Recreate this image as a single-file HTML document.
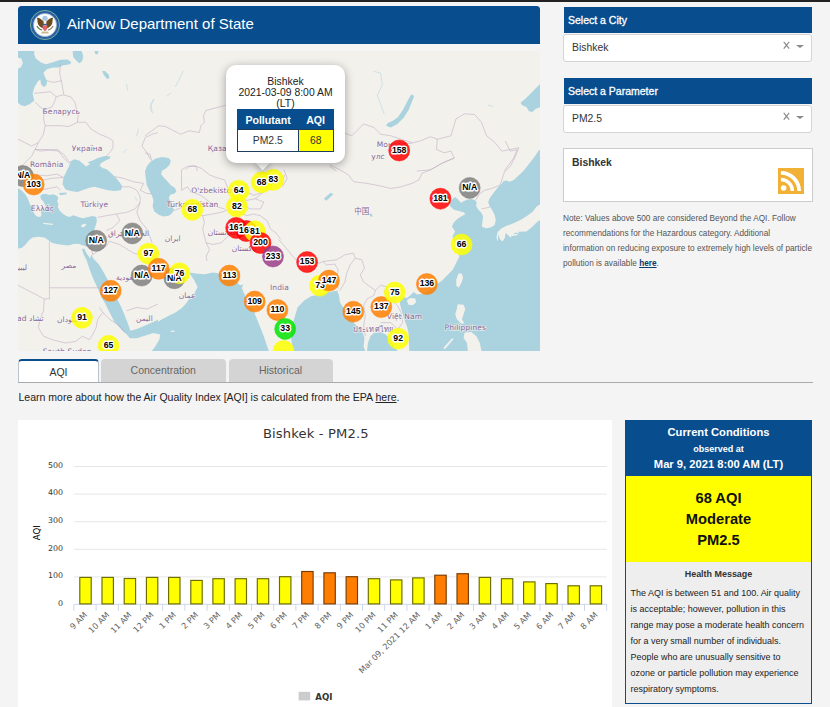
<!DOCTYPE html>
<html lang="en">
<head>
<meta charset="utf-8">
<title>AirNow Department of State</title>
<style>
*{box-sizing:border-box;margin:0;padding:0}
html,body{width:830px;height:707px;overflow:hidden;background:#f4f4f4;font-family:"Liberation Sans",sans-serif;color:#333}
body{position:relative}
.abs{position:absolute}
#topbar{left:0;top:0;width:830px;height:2px;background:#222}
#hdr{left:18px;top:6.2px;width:522px;height:37.5px;background:#084e8f;border-radius:3.5px 3.5px 0 0;color:#fff}
#hdr .t{position:absolute;left:49px;top:9px;font-size:15px;line-height:18px;white-space:nowrap}
#map{left:18px;top:51px;width:522px;height:300px;overflow:hidden;background:#f2efe9}
.ml{font:bold 9.9px "Liberation Sans",sans-serif;text-anchor:middle;fill:#000;stroke:#fff;stroke-width:3px;stroke-linejoin:round;paint-order:stroke fill}
.cl{font:7.5px "DejaVu Sans","Noto Sans CJK SC",sans-serif;fill:#85689a;stroke:#f8f6f2;stroke-width:1.3px;stroke-opacity:.75;paint-order:stroke fill;letter-spacing:.1px}
#pop{left:226px;top:64.5px;width:119px;height:98.5px;background:#fff;border-radius:10px;box-shadow:0 2px 10px rgba(0,0,0,.35);font-size:10.4px;line-height:11.2px;color:#222;text-align:center}
#pop .tx{position:absolute;left:0;top:11.5px;width:100%}
#pop table{position:absolute;left:11px;top:44.3px;width:97px;border-collapse:collapse;border:1px solid #084e8f}
#pop th{background:#084e8f;color:#fff;font-size:10.6px;font-weight:bold;height:20.5px;line-height:12px;padding:0}
#pop td{height:22px;font-size:10.4px;color:#333;border:1px solid #1c3d5e;padding:0;line-height:12px}
#tip{left:256.7px;top:157.3px;width:11.4px;height:11.4px;background:#fff;transform:rotate(45deg);box-shadow:2px 2px 6px rgba(0,0,0,.25)}
.ph{background:#084e8f;color:#fff;font-size:10.5px;line-height:26px;padding-left:4px;height:26.5px;left:564px;width:248px;white-space:nowrap;-webkit-text-stroke:0.3px #fff}
.sel{left:563px;width:248.8px;height:28.2px;background:#fff;border:1px solid #d4d4d4;border-radius:3px;font-size:10.4px;line-height:26.4px;padding-left:8px;color:#333}
.sel .x{position:absolute;right:18.4px;top:-1.4px;font-size:11.5px;color:#888;transform:scale(.92,1.12)}
.sel .c{position:absolute;right:7.3px;top:10.2px;width:0;height:0;border-left:4px solid transparent;border-right:4px solid transparent;border-top:3.3px solid #888}
#city{left:563px;top:148px;width:250px;height:54px;background:#fff;border:1px solid #ccc}
#city b{position:absolute;left:8px;top:6.5px;font-size:10.4px;line-height:14px;color:#333}
#rss{left:778px;top:168px;width:26px;height:26px}
#note{left:563px;top:212.3px;font-size:8.25px;line-height:14.95px;color:#555;white-space:nowrap}
#note a{color:#0a3a6a;font-weight:bold;text-decoration:underline}
.tab{top:359.2px;height:23.3px;border-radius:4px 4px 0 0;font-size:10.5px;line-height:23px;text-align:center;background:#d4d4d4;color:#666}
#tabline{left:18px;top:381.5px;width:795px;height:1px;background:#aaa}
#learn{left:18.5px;top:390.2px;font-size:10.52px;line-height:14px;color:#222;white-space:nowrap}
#learn a{color:#222;text-decoration:underline}
#chart{left:18px;top:420px;width:594px;height:287px;background:#fff}
#cc{left:625px;top:420px;width:187px;height:283.5px;border:1px solid #084e8f;background:#eee}
#cc .h{position:absolute;left:0;top:0;width:100%;height:54.6px;background:#084e8f;color:#fff;text-align:center;font-weight:bold;font-size:11.2px;line-height:16px}
#cc .h div{position:absolute;left:0;width:100%;white-space:nowrap}
#cc .y{position:absolute;left:0;top:54.6px;width:100%;height:86.3px;background:#ffff00;color:#111;text-align:center;font-weight:bold;font-size:14.7px;line-height:21px;padding-top:12.6px}
#cc .hm{position:absolute;left:0;top:145.8px;width:100%;text-align:center;font-weight:bold;font-size:8.95px;line-height:14px;color:#333}
#cc .m{position:absolute;left:4.5px;top:163.5px;font-size:8.97px;line-height:16.07px;color:#222;white-space:nowrap}
</style>
</head>
<body>
<div id="topbar" class="abs"></div>
<div id="hdr" class="abs"><svg class="abs" style="left:12px;top:4px" width="30" height="30" viewBox="-15 -15 30 30"><circle r="14.6" fill="#2a62a4" stroke="#86b39c" stroke-width=".9"/><circle r="11.5" fill="#fdfdfd" stroke="#9db9c9" stroke-width=".7"/><circle cx="0" cy="-6.6" r="2.7" fill="#a9c8e4"/><path d="M-1.2-3.2C-4-6.5-6.5-7.6-8-7.2c.6 1.8.3 4.2 1 6.2 1 2.4 3.2 3.6 5.2 4.2zM1.2-3.2C4-6.5 6.5-7.6 8-7.2c-.6 1.8-.3 4.2-1 6.2-1 2.4-3.2 3.6-5.2 4.2z" fill="#6b4a1c"/><path d="M-2.4-1.2h4.8v1.6h-4.8z" fill="#3a5f8a"/><path d="M-2.4.4h4.8v2.4c0 1.6-1.2 2.6-2.4 3.2-1.2-.6-2.4-1.6-2.4-3.2z" fill="#e0646a"/><path d="M-8.6 1.2c1.200 2.400 3 3.800 5.400 4.400l.4-1.200c-2.200-.4-3.800-1.600-4.800-3.600z" fill="#4f7f3a"/><path d="M8.600 1.200c-1.200 2.400-3 3.800-5.400 4.400l-.4-1.200c2.200-.4 3.800-1.600 4.800-3.600z" fill="#8a7a5a"/><path d="M-3 6.400h6l1 2.200h-8z" fill="#c9b98f"/><circle cx="0" cy="-3.300" r="1.300" fill="#f2efe6"/></svg><span class="t">AirNow Department of State</span></div>
<div id="map" class="abs">
<svg width="522" height="300" viewBox="0 0 522 300" style="position:absolute;left:0;top:0"><rect width="522" height="300" fill="#f3f1ec"/><g style="filter:blur(.3px)"><path d="M0.0 0.0L16.5 0.0L16.0 3.1L17.8 7.6L22.9 11.5L28.0 13.2L34.8 11.2L42.4 8.8L49.6 8.5L53.5 11.2L51.8 13.2L44.5 14.6L40.7 16.6L34.8 16.6L28.8 18.3L25.5 21.7L26.8 25.5L29.2 30.2L28.2 34.4L25.5 36.0L23.1 33.3L22.2 28.5L20.0 30.2L16.5 36.0L14.6 42.4L16.3 49.6L11.9 52.9L6.8 55.2L2.5 54.0L0.0 51.8L0.0 17.8L3.1 16.1L4.8 11.9L3.4 7.6L0.0 6.8Z" fill="#aad3df"/>
<path d="M54.6 0.0L63.6 0.0L65.3 5.1L64.1 10.2L61.1 12.2L58.0 9.3L55.2 5.9Z" fill="#aad3df"/>
<path d="M76.4 0.0L80.6 0.0L79.4 3.4L77.2 3.1Z" fill="#aad3df"/>
<path d="M84.3 20.0L86.9 20.0L90.8 23.8L91.3 27.2L89.1 28.0L85.7 23.8Z" fill="#aad3df"/>
<path d="M44.5 133.3L45.5 126.5L48.4 120.5L50.9 115.5L52.6 110.4L56.0 108.3L61.1 109.5L65.3 112.9L67.9 115.5L72.1 112.9L69.6 111.2L74.7 109.5L79.8 107.0L86.5 104.9L92.5 105.6L91.6 107.8L87.4 109.5L83.2 112.1L81.5 114.6L84.8 117.2L88.2 118.0L92.5 121.4L97.6 126.5L101.8 131.6L104.4 135.8L102.7 139.2L96.7 140.1L89.9 139.2L83.2 137.5L76.4 135.8L71.3 136.7L66.2 138.4L59.4 140.9L52.6 140.1L47.5 138.4Z" fill="#aad3df"/>
<path d="M127.0 120.5L128.7 115.5L132.1 111.2L137.2 107.8L144.0 106.1L150.8 107.0L152.8 109.5L151.6 113.8L148.2 117.2L144.0 119.7L143.1 123.1L145.7 126.5L149.1 129.9L152.5 134.1L156.7 136.7L158.4 140.1L156.7 142.6L152.5 143.5L150.8 146.8L152.5 151.1L155.0 155.3L155.8 159.6L154.2 162.1L150.8 164.7L145.7 165.5L140.6 163.8L136.3 160.4L134.6 155.3L135.5 149.4L133.8 144.3L131.2 139.2L128.7 134.1L127.8 127.3Z" fill="#aad3df"/>
<path d="M0.0 137.2L3.6 139.6L7.2 143.3L9.6 146.9L11.4 151.7L13.3 155.9L15.1 160.1L16.9 163.7L19.9 166.1L22.9 165.5L23.5 162.5L21.7 159.5L24.1 157.1L26.5 158.9L28.9 157.1L27.1 154.1L25.3 150.5L22.9 148.1L22.3 145.1L24.1 143.3L27.7 142.7L31.3 143.9L34.9 143.3L38.6 144.5L40.4 146.9L39.2 149.9L40.4 152.9L39.8 155.9L41.6 159.5L44.6 162.5L48.2 164.9L51.8 166.1L55.4 164.3L60.2 166.1L65.1 167.3L69.9 166.1L74.7 164.9L78.3 166.1L78.9 169.8L77.7 174.6L75.9 180.6L73.5 186.6L71.1 192.7L69.3 195.7L65.1 194.5L60.2 192.7L55.4 192.9L50.6 194.5L45.8 193.9L39.8 193.3L33.7 191.7L30.1 189.0L26.5 186.6L20.5 185.7L14.5 186.6L10.8 189.6L7.2 193.9L3.6 196.9L0.0 197.5Z" fill="#aad3df"/>
<path d="M41.0 142.0L48.2 141.4L48.8 143.3L42.2 144.2Z" fill="#aad3df"/>
<path d="M63.8 197.8L65.8 203.8L68.6 209.2L72.0 219.4L76.0 229.6L80.1 238.0L83.5 246.5L86.9 252.0L91.1 260.4L96.2 270.6L103.9 279.1L107.9 282.5L112.0 287.2L118.8 287.2L129.0 283.9L140.0 280.5L140.0 268.8L129.0 273.7L118.8 277.9L112.3 279.8L110.3 273.7L106.9 264.8L103.5 256.4L98.9 247.5L96.0 240.8L93.0 235.3L89.6 228.5L85.9 221.7L80.8 213.3L75.3 207.5L73.3 203.4L72.1 207.5L68.7 202.6L66.2 197.8Z" fill="#aad3df"/>
<path d="M127.0 276.7L130.4 275.0L137.2 272.5L144.0 268.2L150.8 264.8L157.5 261.5L163.5 257.2L167.7 253.0L171.1 247.9L176.2 242.8L179.6 236.0L176.2 229.2L171.1 221.6L177.9 222.4L186.4 223.3L194.9 221.6L201.7 222.4L218.6 230.9L222.0 234.3L225.4 233.5L223.7 236.8L226.3 242.8L228.8 247.9L235.6 259.8L239.0 268.2L242.4 276.7L245.8 285.2L249.2 295.4L250.9 300.0L133.8 300.0L137.2 295.4L141.4 288.6L142.3 283.5L133.8 281.8L127.0 281.8Z" fill="#aad3df"/>
<path d="M368.0 74.7L372.8 76.4L379.2 73.0L385.5 67.0L390.8 58.5L394.2 50.1L396.2 45.0L393.5 43.3L389.2 50.4L385.0 58.7L379.9 66.2L374.1 70.3L369.7 72.1Z" fill="#aad3df"/>
<path d="M382.0 69.2L385.9 65.5L390.5 58.5L393.0 51.4L394.7 45.5L392.5 44.6L390.0 50.6L387.4 57.0L383.4 62.8L382.0 64.5Z" fill="#aad3df"/>
<path d="M305.8 147.7L312.5 141.8L315.4 142.9L311.7 146.8L308.3 149.7Z" fill="#aad3df"/>
<path d="M350.7 163.0L353.3 162.6L355.0 165.5L352.4 165.5Z" fill="#aad3df"/>
<path d="M275.2 300.0L273.5 290.3L272.7 281.8L274.4 275.0L276.1 268.2L279.5 256.4L286.2 249.6L293.0 245.3L301.5 243.6L311.7 241.1L319.3 239.4L321.0 244.5L321.9 251.3L325.3 256.4L333.8 269.9L338.8 275.0L343.9 280.1L346.5 286.9L345.6 295.4L347.3 300.0Z" fill="#aad3df"/>
<path d="M349.0 300.0L349.9 292.0L352.4 285.2L355.8 281.8L362.6 281.0L367.7 283.5L372.8 288.6L376.2 295.4L379.6 300.0Z" fill="#aad3df"/>
<path d="M522.8 32.2L517.8 37.3L512.7 42.4L507.6 47.5L502.5 51.8L504.2 54.3L508.4 56.0L511.0 60.2L514.4 61.1L517.8 57.7L522.8 56.0Z" fill="#aad3df"/>
<path d="M522.8 99.3L521.1 99.0L516.0 106.6L510.9 113.0L505.8 119.4L500.7 124.5L495.6 128.9L491.8 130.8L488.0 129.5L485.5 130.2L482.9 133.4L479.1 137.2L475.3 142.3L471.5 147.4L470.2 151.2L471.5 155.0L474.0 158.8L476.6 163.9L477.8 169.0L476.6 174.1L472.7 176.6L467.6 177.3L463.8 175.4L464.5 170.3L465.1 165.2L463.2 161.4L460.0 158.2L458.1 155.0L458.7 151.2L456.8 149.3L453.6 148.0L449.8 148.6L446.0 149.9L442.8 151.8L439.6 148.0L437.1 146.1L433.3 149.3L432.0 152.5L432.0 155.0L435.8 158.8L440.9 160.1L446.0 161.4L447.3 163.3L443.5 165.2L439.6 167.7L435.8 171.6L433.9 175.4L437.1 180.5L434.5 185.6L435.8 189.0L441.4 205.5L438.0 212.2L434.6 219.0L429.5 224.1L424.4 229.2L417.6 234.3L410.8 239.4L404.1 242.8L399.0 243.6L395.6 241.1L392.2 244.5L388.8 247.0L385.4 246.2L382.0 247.9L382.0 253.0L383.7 259.8L386.2 268.2L388.8 275.0L390.5 281.8L391.3 300.5L523.0 301.0L523.0 99.0Z" fill="#aad3df"/>
<path d="M522.6 153.1L518.6 155.6L514.7 160.7L509.6 164.6L503.3 168.4L495.6 172.2L488.0 175.1L482.9 177.7L479.4 181.5L478.5 186.8L479.7 190.6L480.4 183.4L482.1 188.5L484.7 190.5L486.9 186.8L487.6 181.7L492.8 186.8L493.7 183.6L498.2 181.5L501.4 183.0L491.5 183.1L494.0 185.1L499.1 184.2L500.8 180.8L508.4 180.5L513.5 176.6L518.6 171.6L522.6 168.4Z" fill="#f3f1ec"/>
<path d="M388.8 249.6L392.2 247.0L397.3 247.5L398.1 251.3L394.7 254.3L390.5 253.8Z" fill="#f3f1ec"/>
<path d="M440.5 222.4L443.9 222.4L445.1 226.7L443.1 232.6L440.5 236.8L438.3 234.3L438.3 228.4Z" fill="#f3f1ec"/>
<path d="M439.7 253.3L445.6 253.8L447.3 258.1L445.6 263.2L443.9 268.2L446.5 272.5L443.1 272.5L438.8 268.2L437.2 263.2L438.8 258.1Z" fill="#f3f1ec"/>
<path d="M446.5 281.8L453.3 281.0L458.4 285.2L461.8 292.0L463.5 300.0L449.9 300.0L449.0 292.0L445.6 286.9Z" fill="#f3f1ec"/>
<path d="M425.3 297.1L432.9 288.6L434.9 286.9L435.6 287.9L432.9 291.2L427.0 297.9Z" fill="#f3f1ec"/>
<path d="M152.6 279.7L156.2 279.5L156.8 280.7L153.2 280.9Z" fill="#f3f1ec"/>
<path d="M63.3 174.0L65.7 173.1L68.4 172.8L67.5 174.8L65.1 176.4L63.3 175.8Z" fill="#f3f1ec"/>
<path d="M25.3 171.8L30.1 172.2L34.9 172.8L34.9 173.9L30.1 173.6L25.5 172.9Z" fill="#f3f1ec"/>
<path d="M42.4 13.6L41.6 22.1L43.3 29.7L45.0 39.0L45.8 43.3M28.8 29.7L35.6 31.4L43.3 29.7M16.1 42.4L23.8 41.6L32.2 40.7L38.2 45.8L45.0 43.8M38.2 45.8L36.5 50.9L33.9 56.0L26.3 58.5L22.1 56.0L17.0 50.9M45.0 43.8L52.6 45.8L56.8 50.9L58.5 57.7L60.2 64.5L59.4 71.3L56.0 73.0L50.9 75.5L42.4 74.7L33.9 74.7L27.2 74.7L25.5 67.9L26.3 58.5M59.4 71.3L67.9 71.3L73.0 78.1L81.5 83.2L89.9 86.5L95.0 89.9L95.0 96.7L91.6 101.8L88.2 105.2M27.2 74.7L25.5 83.2L20.4 91.6L17.0 98.4L22.1 100.1L30.5 99.3L39.0 98.4L45.8 103.5L50.9 110.3M0.0 88.2L6.8 91.6L13.6 95.0L20.4 91.6M17.0 98.4L13.6 105.2L8.5 110.3L3.4 115.4L0.0 118.8M140.0 81.5L134.1 83.2L127.3 86.5L123.9 95.0L129.0 101.8L132.4 108.6M127.0 84.8L133.8 79.8L140.6 74.7L147.4 75.5L155.8 79.8L162.6 83.2L171.1 79.8L181.3 81.5L183.0 74.7L186.4 71.3L185.5 64.5L188.1 59.4L198.3 56.8L207.6 54.3M127.0 101.8L132.1 103.5L133.8 110.3M167.7 118.8L171.1 115.4L177.9 115.4L179.6 120.0M163.5 118.8L169.4 115.5L176.2 114.6L183.0 117.2L191.5 123.9L198.3 126.5L206.8 129.0L208.5 134.1L211.8 140.9M163.5 118.8L163.5 127.3L163.5 139.2L169.4 135.8L172.8 140.9L183.0 144.3L191.5 151.1L200.0 156.2L206.8 157.9M155.8 159.6L164.3 156.2L172.8 157.9L179.6 163.0L184.7 164.7L186.4 171.5M186.4 171.5L184.7 178.2L186.4 185.0L188.1 191.8L194.9 193.5L203.4 191.8L208.5 186.7L213.5 181.6M184.7 164.7L194.9 163.0L203.4 161.3L211.8 157.9L222.0 161.3L228.8 164.7L235.6 163.0L242.4 164.7M188.1 191.8L191.5 198.6L188.1 205.4L188.9 210.0M228.8 140.9L235.6 144.3L245.8 140.9L256.0 135.8L262.8 132.4L267.0 123.9M228.8 140.9L222.0 146.0L228.8 149.4L237.3 147.7L245.8 140.9M222.0 146.0L225.4 154.5L232.2 157.9L242.4 157.9L245.8 151.1L237.3 147.7M242.4 164.7L249.2 169.8L252.6 178.2L257.7 181.6L262.8 188.4M325.3 81.5L333.8 84.8L345.6 73.0L355.8 76.4L362.6 83.2L372.8 84.8L383.0 88.2L394.0 91.6M311.7 115.4L318.5 120.0M311.7 113.8L321.9 118.8L330.4 123.9L335.5 130.7L349.0 132.4L362.6 135.0L372.8 137.5L383.0 135.8L394.0 132.4M265.9 118.8L269.3 127.3L264.2 135.8M382.0 91.6L392.2 92.5L402.4 89.9L412.5 85.7L419.3 88.2L422.7 87.4L432.9 84.8L438.0 67.9L446.5 62.8L456.7 63.6L463.5 71.3L468.5 84.8L477.0 91.6L483.8 100.1L492.3 98.4L500.8 96.7L497.4 105.2L492.3 115.4L487.2 120.0M419.3 88.2L418.5 98.4L426.1 101.8L432.9 100.1L436.3 106.9L424.4 112.0L412.5 118.8L399.0 120.0M436.3 107.0L424.4 112.1L412.5 118.8L404.1 122.2L400.7 129.0L393.9 132.4M487.2 90.0L492.3 100.2L499.1 98.5L495.7 107.0L487.2 118.8L483.8 129.0L482.1 134.1M482.1 134.1L473.6 137.5L466.8 139.2L461.8 142.6L457.5 149.4M463.5 157.9L471.9 156.2M260.8 188.5L269.3 198.7L277.8 208.8L301.5 212.2L304.9 210.5L318.5 208.8L327.0 203.8L335.5 202.1L337.2 207.2M304.9 210.5L308.3 213.9L316.8 213.1L320.2 219.0L318.5 227.5L320.2 237.7M337.2 207.2L332.1 213.9L328.7 222.4L327.0 230.9L321.9 239.4M337.2 207.2L343.9 208.8L346.5 217.3L342.2 224.1L345.6 230.9L352.4 236.0L357.5 239.4L355.8 244.5L349.0 247.9L345.6 254.7L347.3 264.8L345.6 275.0L347.3 285.2M357.5 239.4L362.6 234.3L369.4 236.0L366.0 241.1L372.8 247.9L379.6 254.7L383.0 261.5L384.7 271.6L379.6 278.4M362.6 271.6L372.8 271.6L379.6 278.4M31.4 190.2L31.4 236.8M31.4 236.8L81.5 236.8M31.4 236.8L31.4 247.9L26.3 247.9M0.0 234.3L26.3 247.9M26.3 247.9L25.5 259.8L22.1 268.2L20.4 276.7L25.5 285.2M25.5 285.2L33.9 288.6L47.5 292.0L57.7 290.3L64.5 285.2L71.3 288.6M81.5 256.4L84.8 261.5L79.8 268.2L78.1 276.7L74.7 283.5L71.3 288.6M84.8 261.5L91.6 268.2L101.8 275.0L106.9 281.8M73.0 195.3L74.7 203.8L81.5 198.7L88.2 195.3L91.6 190.2M108.6 259.8L118.8 256.4L129.0 258.1L140.0 253.0M91.6 190.2L101.8 193.6L115.4 202.1L122.2 203.8M79.8 166.4L88.2 164.7L98.4 163.0L108.6 161.3L117.1 157.9L122.2 151.1M104.4 135.8L112.0 135.8L118.8 139.2L122.2 146.0L122.2 151.1M96.7 125.6L105.2 127.3L115.4 130.7L125.6 132.4M122.2 151.1L118.8 161.3L122.2 169.8L129.0 178.2L132.4 186.7L134.1 191.8M98.4 163.0L101.8 169.8L95.0 176.5L88.2 179.9M125.6 132.4L122.2 139.2L129.0 142.6L134.1 142.6M25.5 129.0L33.9 127.3L45.0 126.5M22.1 139.2L30.5 137.5L39.0 135.8L42.4 139.2M18.7 123.9L28.8 124.8L39.0 123.1L45.5 126.5M17.0 98.5L30.5 98.5L40.7 100.2L45.8 107.0L50.9 112.1L52.6 110.4" fill="none" stroke="#b39dba" stroke-opacity=".7" stroke-width=".65" stroke-linejoin="round"/>
<path d="M165.2 20.4L160.9 28.8L157.5 35.6M152.5 42.4L149.1 45.0M136.3 48.4L132.9 52.6L132.1 57.7L134.6 61.9M135.4 48.4L133.2 54.3L134.1 61.1M108.6 33.1L109.5 39.0M120.5 78.1L118.8 84.8M108.6 98.4L105.2 101.8M355.8 20.4L362.6 22.1L364.3 33.9L359.2 44.1L364.3 57.7L366.0 62.8M470.2 54.3L474.5 55.2M117.1 146.0L118.8 149.4" fill="none" stroke="#aad3df" stroke-opacity=".5" stroke-width="1" stroke-linecap="round" stroke-linejoin="round"/></g><text x="43.3" y="63.4" class="cl" text-anchor="middle">Беларусь</text>
<text x="69.2" y="100.3" class="cl" text-anchor="middle">Україна</text>
<text x="28.8" y="115.5" class="cl" text-anchor="middle">România</text>
<text x="24.6" y="160.2" class="cl" text-anchor="middle">Ελλάς</text>
<text x="76.4" y="155.5" class="cl" text-anchor="middle">Türkiye</text>
<text x="189.8" y="99.7" class="cl" text-anchor="start">Қазақстан</text>
<text x="173.2" y="141.9" class="cl" text-anchor="start">O'zbekiston</text>
<text x="174.5" y="155.5" class="cl" text-anchor="middle">Türkmenistan</text>
<text x="154.7" y="189.9" class="cl" text-anchor="middle">ایران</text>
<text x="205.0" y="183.5" class="cl" text-anchor="middle">افغانستان</text>
<text x="226.0" y="199.9" class="cl" text-anchor="middle">پاکستان</text>
<text x="261.5" y="238.7" class="cl" text-anchor="middle">India</text>
<text x="343.8" y="162.9" class="cl" text-anchor="middle">中国</text>
<text x="373.6" y="96.0" class="cl" text-anchor="middle">Монгол</text>
<text x="360.0" y="108.2" class="cl" text-anchor="middle">улс</text>
<text x="50.9" y="217.1" class="cl" text-anchor="middle">مصر</text>
<text x="112.0" y="229.4" class="cl" text-anchor="middle">السعودية</text>
<text x="126.4" y="269.6" class="cl" text-anchor="middle">اليمن</text>
<text x="52.0" y="270.6" class="cl" text-anchor="middle">السودان</text>
<text x="25.5" y="270.1" class="cl" text-anchor="end">Tchad تشاد</text>
<text x="3.4" y="219.2" class="cl" text-anchor="middle">ليبيا</text>
<text x="169.1" y="246.8" class="cl" text-anchor="middle">عمان</text>
<text x="110.6" y="184.9" class="cl" text-anchor="middle">العراق عێراق</text>
<text x="386.5" y="268.4" class="cl" text-anchor="middle">Việt Nam</text>
<text x="355.0" y="281.1" class="cl" text-anchor="middle">ประเทศไทย</text>
<text x="447.3" y="279.4" class="cl" text-anchor="middle">Philippines</text>
<text x="49.2" y="303.2" class="cl" text-anchor="middle">South Sudan</text><circle cx="4.9" cy="125.0" r="10.5" fill="#7e7e7e" fill-opacity=".84" stroke="#7e7e7e" stroke-opacity=".5" stroke-width="1"/>
<circle cx="15.7" cy="133.5" r="10.5" fill="#ff7e00" fill-opacity=".84" stroke="#ff7e00" stroke-opacity=".5" stroke-width="1"/>
<circle cx="78.2" cy="189.8" r="10.5" fill="#7e7e7e" fill-opacity=".84" stroke="#7e7e7e" stroke-opacity=".5" stroke-width="1"/>
<circle cx="114.3" cy="182.4" r="10.5" fill="#7e7e7e" fill-opacity=".84" stroke="#7e7e7e" stroke-opacity=".5" stroke-width="1"/>
<circle cx="123.7" cy="224.6" r="10.5" fill="#7e7e7e" fill-opacity=".84" stroke="#7e7e7e" stroke-opacity=".5" stroke-width="1"/>
<circle cx="156.4" cy="227.3" r="10.5" fill="#7e7e7e" fill-opacity=".84" stroke="#7e7e7e" stroke-opacity=".5" stroke-width="1"/>
<circle cx="161.5" cy="222.2" r="10.5" fill="#ffff00" fill-opacity=".84" stroke="#ffff00" stroke-opacity=".5" stroke-width="1"/>
<circle cx="130.4" cy="202.7" r="10.5" fill="#ffff00" fill-opacity=".84" stroke="#ffff00" stroke-opacity=".5" stroke-width="1"/>
<circle cx="140.6" cy="217.8" r="10.5" fill="#ff7e00" fill-opacity=".84" stroke="#ff7e00" stroke-opacity=".5" stroke-width="1"/>
<circle cx="92.7" cy="239.8" r="10.5" fill="#ff7e00" fill-opacity=".84" stroke="#ff7e00" stroke-opacity=".5" stroke-width="1"/>
<circle cx="64.0" cy="266.8" r="10.5" fill="#ffff00" fill-opacity=".84" stroke="#ffff00" stroke-opacity=".5" stroke-width="1"/>
<circle cx="90.6" cy="294.8" r="10.5" fill="#ffff00" fill-opacity=".84" stroke="#ffff00" stroke-opacity=".5" stroke-width="1"/>
<circle cx="174.3" cy="158.8" r="10.5" fill="#ffff00" fill-opacity=".84" stroke="#ffff00" stroke-opacity=".5" stroke-width="1"/>
<circle cx="220.7" cy="139.7" r="10.5" fill="#ffff00" fill-opacity=".84" stroke="#ffff00" stroke-opacity=".5" stroke-width="1"/>
<circle cx="218.9" cy="155.6" r="10.5" fill="#ffff00" fill-opacity=".84" stroke="#ffff00" stroke-opacity=".5" stroke-width="1"/>
<circle cx="243.6" cy="131.3" r="10.5" fill="#ffff00" fill-opacity=".84" stroke="#ffff00" stroke-opacity=".5" stroke-width="1"/>
<circle cx="255.3" cy="128.8" r="10.5" fill="#ffff00" fill-opacity=".84" stroke="#ffff00" stroke-opacity=".5" stroke-width="1"/>
<circle cx="218.2" cy="176.9" r="10.5" fill="#ff0000" fill-opacity=".84" stroke="#ff0000" stroke-opacity=".5" stroke-width="1"/>
<circle cx="228.3" cy="180.0" r="10.5" fill="#ff0000" fill-opacity=".84" stroke="#ff0000" stroke-opacity=".5" stroke-width="1"/>
<circle cx="236.9" cy="180.3" r="10.5" fill="#ffff00" fill-opacity=".84" stroke="#ffff00" stroke-opacity=".5" stroke-width="1"/>
<circle cx="242.5" cy="192.0" r="10.5" fill="#ff0000" fill-opacity=".84" stroke="#ff0000" stroke-opacity=".5" stroke-width="1"/>
<circle cx="255.0" cy="205.5" r="10.5" fill="#993c88" fill-opacity=".84" stroke="#993c88" stroke-opacity=".5" stroke-width="1"/>
<circle cx="211.4" cy="224.6" r="10.5" fill="#ff7e00" fill-opacity=".84" stroke="#ff7e00" stroke-opacity=".5" stroke-width="1"/>
<circle cx="236.7" cy="250.6" r="10.5" fill="#ff7e00" fill-opacity=".84" stroke="#ff7e00" stroke-opacity=".5" stroke-width="1"/>
<circle cx="259.4" cy="259.0" r="10.5" fill="#ff7e00" fill-opacity=".84" stroke="#ff7e00" stroke-opacity=".5" stroke-width="1"/>
<circle cx="267.2" cy="277.9" r="10.5" fill="#00e400" fill-opacity=".84" stroke="#00e400" stroke-opacity=".5" stroke-width="1"/>
<circle cx="265.5" cy="300.0" r="10.5" fill="#ffff00" fill-opacity=".84" stroke="#ffff00" stroke-opacity=".5" stroke-width="1"/>
<circle cx="289.1" cy="211.1" r="10.5" fill="#ff0000" fill-opacity=".84" stroke="#ff0000" stroke-opacity=".5" stroke-width="1"/>
<circle cx="302.0" cy="234.7" r="10.5" fill="#ffff00" fill-opacity=".84" stroke="#ffff00" stroke-opacity=".5" stroke-width="1"/>
<circle cx="311.0" cy="229.6" r="10.5" fill="#ff7e00" fill-opacity=".84" stroke="#ff7e00" stroke-opacity=".5" stroke-width="1"/>
<circle cx="335.3" cy="260.7" r="10.5" fill="#ff7e00" fill-opacity=".84" stroke="#ff7e00" stroke-opacity=".5" stroke-width="1"/>
<circle cx="363.3" cy="256.0" r="10.5" fill="#ff7e00" fill-opacity=".84" stroke="#ff7e00" stroke-opacity=".5" stroke-width="1"/>
<circle cx="376.8" cy="241.5" r="10.5" fill="#ffff00" fill-opacity=".84" stroke="#ffff00" stroke-opacity=".5" stroke-width="1"/>
<circle cx="408.9" cy="233.0" r="10.5" fill="#ff7e00" fill-opacity=".84" stroke="#ff7e00" stroke-opacity=".5" stroke-width="1"/>
<circle cx="380.2" cy="287.7" r="10.5" fill="#ffff00" fill-opacity=".84" stroke="#ffff00" stroke-opacity=".5" stroke-width="1"/>
<circle cx="443.6" cy="193.5" r="10.5" fill="#ffff00" fill-opacity=".84" stroke="#ffff00" stroke-opacity=".5" stroke-width="1"/>
<circle cx="422.4" cy="147.7" r="10.5" fill="#ff0000" fill-opacity=".84" stroke="#ff0000" stroke-opacity=".5" stroke-width="1"/>
<circle cx="451.7" cy="136.9" r="10.5" fill="#7e7e7e" fill-opacity=".84" stroke="#7e7e7e" stroke-opacity=".5" stroke-width="1"/>
<circle cx="381.2" cy="99.5" r="10.5" fill="#ff0000" fill-opacity=".84" stroke="#ff0000" stroke-opacity=".5" stroke-width="1"/>
<text transform="translate(4.9,127.3) scale(.88,1)" class="ml">N/A</text>
<text transform="translate(15.7,135.8) scale(.88,1)" class="ml">103</text>
<text transform="translate(78.2,192.1) scale(.88,1)" class="ml">N/A</text>
<text transform="translate(114.3,184.7) scale(.88,1)" class="ml">N/A</text>
<text transform="translate(123.7,226.9) scale(.88,1)" class="ml">N/A</text>
<text transform="translate(156.4,229.6) scale(.88,1)" class="ml">N/A</text>
<text transform="translate(161.5,224.5) scale(.88,1)" class="ml">76</text>
<text transform="translate(130.4,205.0) scale(.88,1)" class="ml">97</text>
<text transform="translate(140.6,220.1) scale(.88,1)" class="ml">117</text>
<text transform="translate(92.7,242.1) scale(.88,1)" class="ml">127</text>
<text transform="translate(64.0,269.1) scale(.88,1)" class="ml">91</text>
<text transform="translate(90.6,297.1) scale(.88,1)" class="ml">65</text>
<text transform="translate(174.3,161.1) scale(.88,1)" class="ml">68</text>
<text transform="translate(220.7,142.0) scale(.88,1)" class="ml">64</text>
<text transform="translate(218.9,157.9) scale(.88,1)" class="ml">82</text>
<text transform="translate(243.6,133.6) scale(.88,1)" class="ml">68</text>
<text transform="translate(255.3,131.1) scale(.88,1)" class="ml">83</text>
<text transform="translate(218.2,179.2) scale(.88,1)" class="ml">161</text>
<text transform="translate(228.3,182.3) scale(.88,1)" class="ml">168</text>
<text transform="translate(236.9,182.6) scale(.88,1)" class="ml">81</text>
<text transform="translate(242.5,194.3) scale(.88,1)" class="ml">200</text>
<text transform="translate(255.0,207.8) scale(.88,1)" class="ml">233</text>
<text transform="translate(211.4,226.9) scale(.88,1)" class="ml">113</text>
<text transform="translate(236.7,252.9) scale(.88,1)" class="ml">109</text>
<text transform="translate(259.4,261.3) scale(.88,1)" class="ml">110</text>
<text transform="translate(267.2,280.2) scale(.88,1)" class="ml">33</text>
<text transform="translate(289.1,213.4) scale(.88,1)" class="ml">153</text>
<text transform="translate(302.0,237.0) scale(.88,1)" class="ml">73</text>
<text transform="translate(311.0,231.9) scale(.88,1)" class="ml">147</text>
<text transform="translate(335.3,263.0) scale(.88,1)" class="ml">145</text>
<text transform="translate(363.3,258.3) scale(.88,1)" class="ml">137</text>
<text transform="translate(376.8,243.8) scale(.88,1)" class="ml">75</text>
<text transform="translate(408.9,235.3) scale(.88,1)" class="ml">136</text>
<text transform="translate(380.2,290.0) scale(.88,1)" class="ml">92</text>
<text transform="translate(443.6,195.8) scale(.88,1)" class="ml">66</text>
<text transform="translate(422.4,150.0) scale(.88,1)" class="ml">181</text>
<text transform="translate(451.7,139.2) scale(.88,1)" class="ml">N/A</text>
<text transform="translate(381.2,101.8) scale(.88,1)" class="ml">158</text></svg>
</div>
<div id="tip" class="abs"></div>
<div id="pop" class="abs"><div class="tx">Bishkek<br>2021-03-09 8:00 AM<br>(LT)</div>
<table><tr><th style="width:60.6px">Pollutant</th><th>AQI</th></tr><tr><td style="background:#fff">PM2.5</td><td style="background:#ffff00">68</td></tr></table></div>

<div class="abs ph" style="top:6.8px">Select a City</div>
<div class="abs sel" style="top:33.5px">Bishkek<span class="x">&#10005;</span><span class="c"></span></div>
<div class="abs ph" style="top:77.6px">Select a Parameter</div>
<div class="abs sel" style="top:104.5px">PM2.5<span class="x">&#10005;</span><span class="c"></span></div>
<div id="city" class="abs"><b>Bishkek</b></div>
<svg id="rss" class="abs" viewBox="0 0 26 26"><rect width="26" height="26" fill="#f1b036"/><circle cx="5.6" cy="20" r="2.8" fill="#fff"/><path d="M2.9 4.8a18.2 18.2 0 0 1 18.2 18.2" fill="none" stroke="#fff" stroke-width="3.8"/><path d="M2.9 11.5a11.5 11.5 0 0 1 11.5 11.5" fill="none" stroke="#fff" stroke-width="3.5"/></svg>
<div id="note" class="abs">Note: Values above 500 are considered Beyond the AQI. Follow<br>recommendations for the Hazardous category. Additional<br>information on reducing exposure to extremely high levels of particle<br>pollution is available <a>here</a>.</div>

<div class="abs tab" style="left:18px;width:81px;background:#fff;color:#333;border:1px solid #b8c4d0;border-top:2px solid #084e8f;border-bottom:none;line-height:22.5px">AQI</div>
<div class="abs tab" style="left:101px;width:124.5px">Concentration</div>
<div class="abs tab" style="left:228.5px;width:104px">Historical</div>
<div id="tabline" class="abs"></div>
<div id="learn" class="abs">Learn more about how the Air Quality Index [AQI] is calculated from the EPA <a>here</a>.</div>

<div id="chart" class="abs">
<svg width="594" height="287" viewBox="18 420 594 287" style="position:absolute;left:0;top:0;font-family:'DejaVu Sans','Liberation Sans',sans-serif">
<text x="315.8" y="437.7" text-anchor="middle" font-size="13.1" letter-spacing=".15" fill="#333">Bishkek - PM2.5</text>
<rect x="73.9" y="466.0" width="532.8" height="1" fill="#e6e6e6"/>
<rect x="73.9" y="493.6" width="532.8" height="1" fill="#e6e6e6"/>
<rect x="73.9" y="521.2" width="532.8" height="1" fill="#e6e6e6"/>
<rect x="73.9" y="548.8" width="532.8" height="1" fill="#e6e6e6"/>
<rect x="73.9" y="576.4" width="532.8" height="1" fill="#e6e6e6"/>
<text x="63" y="467.8" text-anchor="end" font-size="7.9" fill="#333">500</text>
<text x="63" y="495.4" text-anchor="end" font-size="7.9" fill="#333">400</text>
<text x="63" y="523.0" text-anchor="end" font-size="7.9" fill="#333">300</text>
<text x="63" y="550.6" text-anchor="end" font-size="7.9" fill="#333">200</text>
<text x="63" y="578.2" text-anchor="end" font-size="7.9" fill="#333">100</text>
<text x="63" y="605.8" text-anchor="end" font-size="7.9" fill="#333">0</text>
<text transform="translate(40.2,532.7) rotate(-90)" text-anchor="middle" font-size="8.6" fill="#000">AQI</text>
<rect x="73.9" y="603.8" width="532.8" height="1" fill="#ccd6eb"/>
<rect x="73.4" y="604" width="1" height="6.8" fill="#ccd6eb"/>
<rect x="95.6" y="604" width="1" height="6.8" fill="#ccd6eb"/>
<rect x="117.8" y="604" width="1" height="6.8" fill="#ccd6eb"/>
<rect x="140.0" y="604" width="1" height="6.8" fill="#ccd6eb"/>
<rect x="162.2" y="604" width="1" height="6.8" fill="#ccd6eb"/>
<rect x="184.4" y="604" width="1" height="6.8" fill="#ccd6eb"/>
<rect x="206.6" y="604" width="1" height="6.8" fill="#ccd6eb"/>
<rect x="228.8" y="604" width="1" height="6.8" fill="#ccd6eb"/>
<rect x="251.0" y="604" width="1" height="6.8" fill="#ccd6eb"/>
<rect x="273.2" y="604" width="1" height="6.8" fill="#ccd6eb"/>
<rect x="295.4" y="604" width="1" height="6.8" fill="#ccd6eb"/>
<rect x="317.6" y="604" width="1" height="6.8" fill="#ccd6eb"/>
<rect x="339.8" y="604" width="1" height="6.8" fill="#ccd6eb"/>
<rect x="362.0" y="604" width="1" height="6.8" fill="#ccd6eb"/>
<rect x="384.2" y="604" width="1" height="6.8" fill="#ccd6eb"/>
<rect x="406.4" y="604" width="1" height="6.8" fill="#ccd6eb"/>
<rect x="428.6" y="604" width="1" height="6.8" fill="#ccd6eb"/>
<rect x="450.8" y="604" width="1" height="6.8" fill="#ccd6eb"/>
<rect x="473.0" y="604" width="1" height="6.8" fill="#ccd6eb"/>
<rect x="495.2" y="604" width="1" height="6.8" fill="#ccd6eb"/>
<rect x="517.4" y="604" width="1" height="6.8" fill="#ccd6eb"/>
<rect x="539.6" y="604" width="1" height="6.8" fill="#ccd6eb"/>
<rect x="561.8" y="604" width="1" height="6.8" fill="#ccd6eb"/>
<rect x="584.0" y="604" width="1" height="6.8" fill="#ccd6eb"/>
<rect x="606.2" y="604" width="1" height="6.8" fill="#ccd6eb"/>
<rect x="79.8" y="577.4" width="11.4" height="26.5" fill="#ffff00" stroke="#6b6b00" stroke-width="1.15"/>
<rect x="102.0" y="577.4" width="11.4" height="26.5" fill="#ffff00" stroke="#6b6b00" stroke-width="1.15"/>
<rect x="124.2" y="578.5" width="11.4" height="25.4" fill="#ffff00" stroke="#6b6b00" stroke-width="1.15"/>
<rect x="146.4" y="577.4" width="11.4" height="26.5" fill="#ffff00" stroke="#6b6b00" stroke-width="1.15"/>
<rect x="168.6" y="577.4" width="11.4" height="26.5" fill="#ffff00" stroke="#6b6b00" stroke-width="1.15"/>
<rect x="190.8" y="580.4" width="11.4" height="23.5" fill="#ffff00" stroke="#6b6b00" stroke-width="1.15"/>
<rect x="212.9" y="578.7" width="11.4" height="25.2" fill="#ffff00" stroke="#6b6b00" stroke-width="1.15"/>
<rect x="235.1" y="578.7" width="11.4" height="25.2" fill="#ffff00" stroke="#6b6b00" stroke-width="1.15"/>
<rect x="257.3" y="578.7" width="11.4" height="25.2" fill="#ffff00" stroke="#6b6b00" stroke-width="1.15"/>
<rect x="279.5" y="576.7" width="11.4" height="27.2" fill="#ffff00" stroke="#6b6b00" stroke-width="1.15"/>
<rect x="301.7" y="571.5" width="11.4" height="32.4" fill="#ff7e00" stroke="#7a3c00" stroke-width="1.15"/>
<rect x="323.9" y="572.8" width="11.4" height="31.1" fill="#ff7e00" stroke="#7a3c00" stroke-width="1.15"/>
<rect x="346.1" y="576.7" width="11.4" height="27.2" fill="#ff7e00" stroke="#7a3c00" stroke-width="1.15"/>
<rect x="368.3" y="578.7" width="11.4" height="25.2" fill="#ffff00" stroke="#6b6b00" stroke-width="1.15"/>
<rect x="390.5" y="579.9" width="11.4" height="24.0" fill="#ffff00" stroke="#6b6b00" stroke-width="1.15"/>
<rect x="412.7" y="577.9" width="11.4" height="26.0" fill="#ffff00" stroke="#6b6b00" stroke-width="1.15"/>
<rect x="434.8" y="575.2" width="11.4" height="28.7" fill="#ff7e00" stroke="#7a3c00" stroke-width="1.15"/>
<rect x="457.0" y="573.7" width="11.4" height="30.2" fill="#ff7e00" stroke="#7a3c00" stroke-width="1.15"/>
<rect x="479.2" y="577.4" width="11.4" height="26.5" fill="#ffff00" stroke="#6b6b00" stroke-width="1.15"/>
<rect x="501.4" y="578.7" width="11.4" height="25.2" fill="#ffff00" stroke="#6b6b00" stroke-width="1.15"/>
<rect x="523.6" y="581.9" width="11.4" height="22.0" fill="#ffff00" stroke="#6b6b00" stroke-width="1.15"/>
<rect x="545.8" y="583.6" width="11.4" height="20.3" fill="#ffff00" stroke="#6b6b00" stroke-width="1.15"/>
<rect x="568.0" y="585.8" width="11.4" height="18.1" fill="#ffff00" stroke="#6b6b00" stroke-width="1.15"/>
<rect x="590.2" y="585.8" width="11.4" height="18.1" fill="#ffff00" stroke="#6b6b00" stroke-width="1.15"/>
<text transform="translate(87.7,615.5) rotate(-45)" text-anchor="end" font-size="8.2" fill="#666">9 AM</text>
<text transform="translate(109.9,615.5) rotate(-45)" text-anchor="end" font-size="8.2" fill="#666">10 AM</text>
<text transform="translate(132.1,615.5) rotate(-45)" text-anchor="end" font-size="8.2" fill="#666">11 AM</text>
<text transform="translate(154.3,615.5) rotate(-45)" text-anchor="end" font-size="8.2" fill="#666">12 PM</text>
<text transform="translate(176.5,615.5) rotate(-45)" text-anchor="end" font-size="8.2" fill="#666">1 PM</text>
<text transform="translate(198.7,615.5) rotate(-45)" text-anchor="end" font-size="8.2" fill="#666">2 PM</text>
<text transform="translate(220.9,615.5) rotate(-45)" text-anchor="end" font-size="8.2" fill="#666">3 PM</text>
<text transform="translate(243.1,615.5) rotate(-45)" text-anchor="end" font-size="8.2" fill="#666">4 PM</text>
<text transform="translate(265.3,615.5) rotate(-45)" text-anchor="end" font-size="8.2" fill="#666">5 PM</text>
<text transform="translate(287.5,615.5) rotate(-45)" text-anchor="end" font-size="8.2" fill="#666">6 PM</text>
<text transform="translate(309.7,615.5) rotate(-45)" text-anchor="end" font-size="8.2" fill="#666">7 PM</text>
<text transform="translate(331.9,615.5) rotate(-45)" text-anchor="end" font-size="8.2" fill="#666">8 PM</text>
<text transform="translate(354.1,615.5) rotate(-45)" text-anchor="end" font-size="8.2" fill="#666">9 PM</text>
<text transform="translate(376.3,615.5) rotate(-45)" text-anchor="end" font-size="8.2" fill="#666">10 PM</text>
<text transform="translate(398.5,615.5) rotate(-45)" text-anchor="end" font-size="8.2" fill="#666">11 PM</text>
<text transform="translate(420.7,615.5) rotate(-45)" text-anchor="end" font-size="8.2" fill="#666">Mar 09, 2021 12 AM</text>
<text transform="translate(442.9,615.5) rotate(-45)" text-anchor="end" font-size="8.2" fill="#666">1 AM</text>
<text transform="translate(465.1,615.5) rotate(-45)" text-anchor="end" font-size="8.2" fill="#666">2 AM</text>
<text transform="translate(487.3,615.5) rotate(-45)" text-anchor="end" font-size="8.2" fill="#666">3 AM</text>
<text transform="translate(509.5,615.5) rotate(-45)" text-anchor="end" font-size="8.2" fill="#666">4 AM</text>
<text transform="translate(531.7,615.5) rotate(-45)" text-anchor="end" font-size="8.2" fill="#666">5 AM</text>
<text transform="translate(553.9,615.5) rotate(-45)" text-anchor="end" font-size="8.2" fill="#666">6 AM</text>
<text transform="translate(576.1,615.5) rotate(-45)" text-anchor="end" font-size="8.2" fill="#666">7 AM</text>
<text transform="translate(598.3,615.5) rotate(-45)" text-anchor="end" font-size="8.2" fill="#666">8 AM</text>
<rect x="298.6" y="691.8" width="11.6" height="8.6" fill="#cccccc"/>
<text x="315.3" y="700" font-size="8.6" font-weight="bold" fill="#333">AQI</text>
</svg>
</div>
<div id="cc" class="abs">
<div class="h"><div style="top:3.2px">Current Conditions</div><div style="top:20.1px;font-size:9px">observed at</div><div style="top:35.1px">Mar 9, 2021 8:00 AM (LT)</div></div>
<div class="y">68 AQI<br>Moderate<br>PM2.5</div>
<div class="hm">Health Message</div>
<div class="m">The AQI is between 51 and 100. Air quality<br>is acceptable; however, pollution in this<br>range may pose a moderate health concern<br>for a very small number of individuals.<br>People who are unusually sensitive to<br>ozone or particle pollution may experience<br>respiratory symptoms.</div>
</div>
</body>
</html>
